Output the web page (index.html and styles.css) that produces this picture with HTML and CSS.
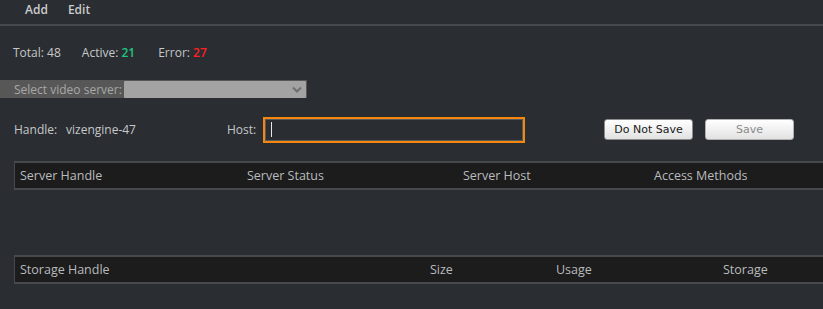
FILE: index.html
```html
<!DOCTYPE html>
<html>
<head>
<meta charset="utf-8">
<link rel="stylesheet" href="styles.css">
</head>
<body>
<nav class="nav">
  <span class="nav-item">Add</span>
  <span class="nav-item">Edit</span>
</nav>
<div class="stats">
  <span>Total: 48</span>
  <span>Active: <b class="ok">21</b></span>
  <span class="err-stat">Error: <b class="err">27</b></span>
</div>
<div class="selbar">
  <span class="sel-label">Select video server:</span>
  <div class="sel-box">
    <svg class="chev" width="10" height="7" viewBox="0 0 10 7"><path d="M1 1.5 L5 5.5 L9 1.5" fill="none" stroke="#6e6e6e" stroke-width="2"/></svg>
  </div>
</div>
<div class="edit-row">
  <span class="lbl handle-lbl">Handle:</span>
  <span class="val">vizengine-47</span>
  <span class="lbl host-lbl">Host:</span>
  <div class="host-input"><span class="caret"></span></div>
  <button class="btn first">Do Not Save</button>
  <button class="btn disabled">Save</button>
</div>
<div class="thead t1">
  <span class="c c1">Server Handle</span>
  <span class="c c2">Server Status</span>
  <span class="c c3">Server Host</span>
  <span class="c c4">Access Methods</span>
</div>
<div class="thead t2">
  <span class="c d1">Storage Handle</span>
  <span class="c d2">Size</span>
  <span class="c d3">Usage</span>
  <span class="c d4">Storage</span>
</div>
</body>
</html>
```
FILE: styles.css
```css
html, body {
  margin: 0;
  padding: 0;
  background: #2a2d31;
  width: 823px;
  height: 309px;
  overflow: hidden;
  font-family: "Open Sans", "Noto Sans", sans-serif;
  font-size: 12px;
  color: #c6c8ca;
}
.nav {
  border-bottom: 2px solid #46494d;
  display: flex;
  align-items: center;
  padding-left: 25px;
  gap: 20px;
  box-sizing: border-box;
  height: 26px;
  padding-bottom: 5px;
}
.nav-item {
  font-weight: 600;
  color: #c9cbcd;
}
.stats {
  height: 54px;
  display: flex;
  align-items: center;
  padding-left: 13px;
  gap: 21px;
  box-sizing: border-box;
  padding-bottom: 2px;
}
.err-stat { margin-left: 2px; }
.stats b { font-weight: 600; }
.ok { color: #1ec67e; }
.err { color: #ff2020; }
.selbar {
  height: 18px;
  background: #575757;
  display: flex;
  align-items: center;
  width: 307px;
  padding-left: 14px;
  box-sizing: border-box;
}
.sel-label {
  color: #a7a7a7;
  white-space: nowrap;
  flex: 0 0 auto;
  width: 110px;
}
.sel-box {
  flex: 0 0 182px;
  height: 17px;
  background: #a3a3a3;
  border-radius: 1px;
  display: flex;
  align-items: center;
  justify-content: flex-end;
  padding-right: 4px;
  box-sizing: border-box;
}
.edit-row {
  height: 63px;
  display: flex;
  align-items: center;
  padding-left: 14px;
  box-sizing: border-box;
}
.handle-lbl { width: 52px; flex: 0 0 auto; }
.val { width: 161px; flex: 0 0 auto; }
.host-lbl { width: 36px; flex: 0 0 auto; }
.host-input {
  flex: 0 0 262px;
  height: 26px;
  box-sizing: border-box;
  border: 2px solid #f5870c;
  box-shadow: inset 0 0 0 1px #555a60;
  background: #2a2d31;
  display: flex;
  align-items: center;
  padding-left: 6px;
}
.caret {
  width: 1px;
  height: 15px;
  background: #e8e8e8;
}
.btn {
  font-family: "DejaVu Sans", "Liberation Sans", sans-serif;
  font-size: 11px;
  height: 21px;
  flex: 0 0 89px;
  border: 1px solid #8c8c8c;
  border-radius: 3px;
  background: linear-gradient(#ffffff, #e2e2e2);
  color: #1a1a1a;
  padding: 0;
  margin-left: 12px;
}
.btn.first { margin-left: 79px; }
.btn.disabled { color: #8a8a8a; border-color: #b0b0b0; }
.thead {
  margin-left: 14px;
  height: 29px;
  background: #1c1c1c;
  border-top: 2px solid #47494c;
  border-left: 1px solid #47494c;
  border-bottom: 2px solid #47494c;
  box-sizing: border-box;
  position: relative;
  color: #b9bbbd;
  font-size: 12.5px;
}
.t1 { margin-top: 0; }
.t2 { margin-top: 65px; }
.c { position: absolute; top: calc(50% - 1px); transform: translateY(-50%); white-space: nowrap; }
.c1 { left: 5px; }
.c2 { left: 232px; }
.c3 { left: 448px; }
.c4 { left: 639px; }
.d1 { left: 5px; }
.d2 { left: 415px; }
.d3 { left: 541px; }
.d4 { left: 708px; }
```
